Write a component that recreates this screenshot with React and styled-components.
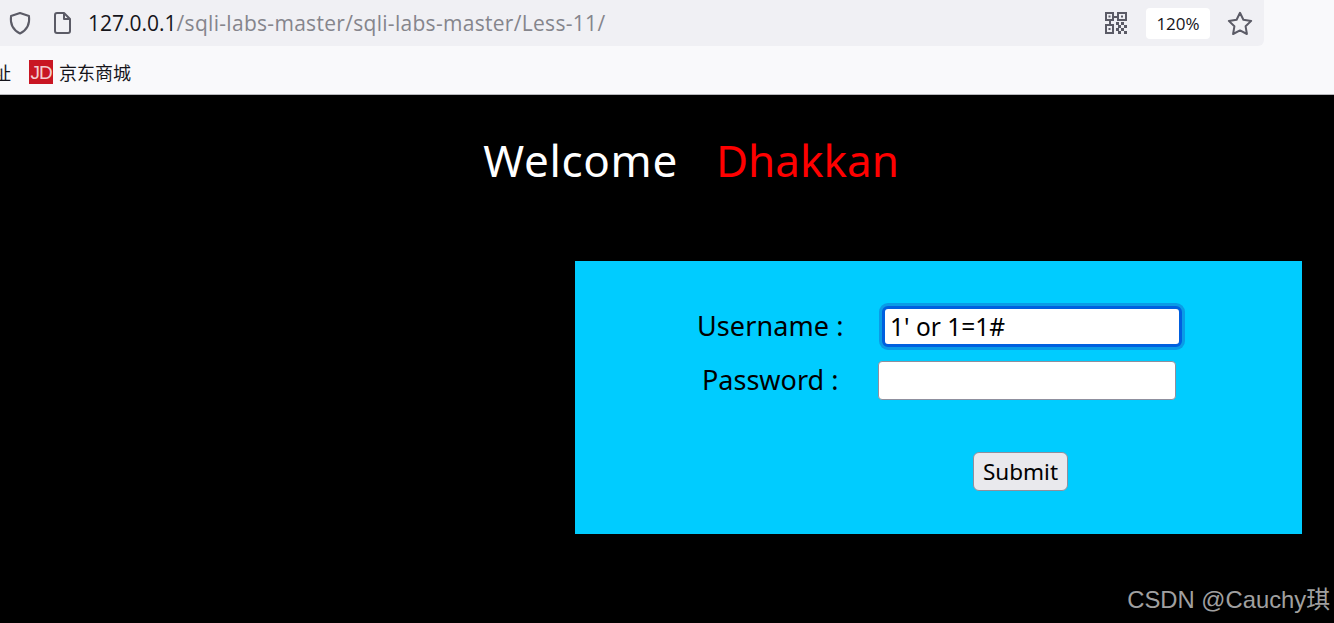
import React from 'react';
import styled, { createGlobalStyle } from 'styled-components';

const GlobalStyle = createGlobalStyle`
  html, body {
    margin: 0;
    padding: 0;
    height: 623px;
    overflow: hidden;
    background: #000;
  }
  * { box-sizing: border-box; }
`;

const Page = styled.div`
  position: relative;
  width: 1334px;
  height: 623px;
  overflow: hidden;
  font-family: "Noto Sans", "Open Sans", sans-serif;
`;

const Chrome = styled.div`
  height: 95px;
  background: #f9f9fb;
  border-bottom: 1px solid #b8b8bc;
`;

const UrlBar = styled.div`
  display: flex;
  align-items: center;
  width: 1264px;
  height: 46px;
  padding: 0 11px 0 8px;
  background: #f0f0f4;
  border-bottom-right-radius: 6px;
`;

const IconSlot = styled.span`
  display: flex;
  width: ${(props) => props.$width}px;
  margin-left: ${(props) => props.$gap || 0}px;
  flex: none;
  align-items: center;
  justify-content: center;
  color: #5b5b66;
`;

const Url = styled.div`
  flex: 1;
  margin-left: 15px;
  font-family: "Open Sans", "Noto Sans", sans-serif;
  font-size: 21px;
  letter-spacing: 0.3px;
  color: #85858c;
  white-space: nowrap;
`;

const Host = styled.span`
  color: #15141a;
  letter-spacing: 0;
`;

const Zoom = styled.div`
  width: 64px;
  height: 31px;
  margin: 0 17px 0 19px;
  border-radius: 4px;
  background: #fff;
  color: #15141a;
  font-family: "Open Sans", sans-serif;
  font-size: 17px;
  line-height: 31px;
  text-align: center;
`;

const Bookmarks = styled.div`
  display: flex;
  align-items: center;
  height: 48px;
  margin-left: -7px;
  padding-top: 4px;
  font-family: "Noto Sans CJK SC", sans-serif;
  font-size: 18px;
  color: #15141a;
`;

const Bookmark = styled.span`
  display: flex;
  align-items: center;
  margin-right: 18px;
`;

const JdLogo = styled.span`
  display: block;
  width: 24px;
  height: 24px;
  margin-right: 6px;
  background: #c91623;
  color: #f3ccd0;
  font-family: "Liberation Sans", sans-serif;
  font-size: 19px;
  line-height: 25px;
  letter-spacing: -1px;
  text-align: center;
`;

const Content = styled.main`
  height: 528px;
  background: #000;
`;

const Title = styled.div`
  display: flex;
  justify-content: center;
  gap: 38px;
  padding: 32px 0 0 48px;
  font-size: 44px;
  font-weight: 400;
  line-height: 66px;
`;

const TitlePart = styled.span`
  color: ${(props) => props.$color};
  letter-spacing: ${(props) => props.$spacing || 0}px;
`;

const Panel = styled.form`
  display: flex;
  flex-direction: column;
  width: 727px;
  height: 273px;
  margin: 68px 0 0 575px;
  padding-top: 45px;
  background: #00ccff;
`;

const Row = styled.div`
  display: flex;
  align-items: center;
  height: 40px;
  margin-bottom: 14px;
  margin-left: ${(props) => props.$offset}px;
`;

const Label = styled.label`
  width: ${(props) => props.$width}px;
  color: #000;
  font-size: 27px;
  letter-spacing: ${(props) => props.$spacing || 0}px;
  line-height: 40px;
  white-space: nowrap;
`;

const Field = styled.input`
  width: 298px;
  height: 39px;
  padding: 0 6px;
  border: 1px solid #8f8f9d;
  border-radius: 4px;
  background: #fff;
  color: #000;
  font-family: "Noto Sans", sans-serif;
  font-size: 24.5px;
  outline: none;

  &.focused {
    width: 300px;
    height: 41px;
    border: 3px solid #0060df;
    padding: 0 5px;
    border-radius: 6px;
    box-shadow: 0 0 0 3px #0a9be6;
  }
`;

const SubmitRow = styled.div`
  display: flex;
  margin: 38px 0 0 398px;
`;

const SubmitButton = styled.button`
  width: 95px;
  height: 39px;
  padding: 0;
  border: 1px solid #8f8f9d;
  border-radius: 6px;
  background: #e9e9ed;
  color: #000;
  font-family: "Noto Sans", sans-serif;
  font-size: 22.5px;
`;

const Watermark = styled.div`
  position: absolute;
  right: 4px;
  bottom: 6px;
  color: #a0a0a0;
  font-family: "Liberation Sans", "Noto Sans CJK SC", sans-serif;
  font-size: 23.8px;
  line-height: 34px;
  white-space: nowrap;
`;

const ShieldIcon = () => (
  <svg width="24" height="24" viewBox="0 0 24 24" fill="none" stroke="currentColor" strokeWidth="2" strokeLinejoin="round">
    <path d="M12 2 L21 5 C22 13 19 19 12 22.5 C5 19 2 13 3 5 Z" />
  </svg>
);

const PageIcon = () => (
  <svg width="20" height="22" viewBox="0 0 20 22" fill="none" stroke="currentColor" strokeWidth="2" strokeLinejoin="round">
    <path d="M3 3 a2 2 0 0 1 2 -2 h7 l6 6 v12 a2 2 0 0 1 -2 2 H5 a2 2 0 0 1 -2 -2 Z" />
    <path d="M12 1 v6 h6" />
  </svg>
);

const QrIcon = () => (
  <svg width="22" height="22" viewBox="0 0 22 22" fill="#5b5b66">
    <path fillRule="evenodd" d="M0 0h9v9H0zM2 2v5h5V2zM12 0h10v9H12zM14 2v5h6V2zM0 12h9v10H0zM2 14v6h5v-6z" />
    <rect x="3.5" y="3.5" width="2" height="2" />
    <rect x="16" y="3.5" width="2" height="2" />
    <rect x="3.5" y="16" width="2" height="2" />
    <rect x="9" y="4" width="3" height="2" />
    <rect x="4" y="9" width="2" height="3" />
    <rect x="11" y="10" width="3" height="3" />
    <rect x="16" y="10" width="3" height="3" />
    <rect x="13" y="13" width="3" height="3" />
    <rect x="19" y="13" width="3" height="3" />
    <rect x="11" y="16" width="3" height="3" />
    <rect x="16" y="16" width="3" height="3" />
    <rect x="13" y="19" width="3" height="3" />
    <rect x="19" y="19" width="3" height="3" />
  </svg>
);

const StarIcon = () => (
  <svg width="26" height="25" viewBox="0 0 26 25" fill="none" stroke="currentColor" strokeWidth="2" strokeLinejoin="round">
    <path d="M13 1.8 L16.4 8.8 L24.2 9.9 L18.6 15.3 L19.9 23 L13 19.4 L6.1 23 L7.4 15.3 L1.8 9.9 L9.6 8.8 Z" />
  </svg>
);

const App = () => (
  <Page>
    <GlobalStyle />
    <Chrome>
      <UrlBar>
        <IconSlot $width={24}><ShieldIcon /></IconSlot>
        <IconSlot $width={22} $gap={19}><PageIcon /></IconSlot>
        <Url><Host>127.0.0.1</Host>/sqli-labs-master/sqli-labs-master/Less-11/</Url>
        <IconSlot $width={22}><QrIcon /></IconSlot>
        <Zoom>120%</Zoom>
        <IconSlot $width={26}><StarIcon /></IconSlot>
      </UrlBar>
      <Bookmarks>
        <Bookmark>址</Bookmark>
        <Bookmark><JdLogo>JD</JdLogo>京东商城</Bookmark>
      </Bookmarks>
    </Chrome>
    <Content>
      <Title>
        <TitlePart $color="#fff" $spacing={0.7}>Welcome</TitlePart>
        <TitlePart $color="#f00">Dhakkan</TitlePart>
      </Title>
      <Panel>
        <Row $offset={122}>
          <Label htmlFor="uname" $width={185} $spacing={0.1}>Username :</Label>
          <Field id="uname" className="focused" defaultValue="1' or 1=1#" />
        </Row>
        <Row $offset={127}>
          <Label htmlFor="passwd" $width={176}>Password :</Label>
          <Field id="passwd" type="password" />
        </Row>
        <SubmitRow><SubmitButton type="button">Submit</SubmitButton></SubmitRow>
      </Panel>
    </Content>
    <Watermark>CSDN @Cauchy琪</Watermark>
  </Page>
);

export default App;
